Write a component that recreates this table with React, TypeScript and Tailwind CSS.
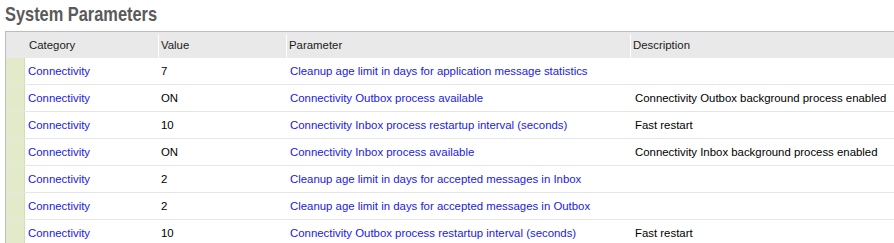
import React from 'react';

type Row = { category: string; value: string; parameter: string; description: string };

const rows: Row[] = [
  { category: 'Connectivity', value: '7', parameter: 'Cleanup age limit in days for application message statistics', description: '' },
  { category: 'Connectivity', value: 'ON', parameter: 'Connectivity Outbox process available', description: 'Connectivity Outbox background process enabled' },
  { category: 'Connectivity', value: '10', parameter: 'Connectivity Inbox process restartup interval (seconds)', description: 'Fast restart' },
  { category: 'Connectivity', value: 'ON', parameter: 'Connectivity Inbox process available', description: 'Connectivity Inbox background process enabled' },
  { category: 'Connectivity', value: '2', parameter: 'Cleanup age limit in days for accepted messages in Inbox', description: '' },
  { category: 'Connectivity', value: '2', parameter: 'Cleanup age limit in days for accepted messages in Outbox', description: '' },
  { category: 'Connectivity', value: '10', parameter: 'Connectivity Outbox process restartup interval (seconds)', description: 'Fast restart' },
];

export default function App() {
  return (
    <div className="w-[894px] h-[243px] overflow-hidden bg-white font-['Liberation_Sans',Arial,sans-serif]">
      <div className="h-[31px] pl-[5px] pt-[1px]">
        {/* condensed heading: no narrow face installed, so squeeze the regular bold */}
        <h1 className="inline-block origin-left scale-x-[0.78] text-[21px] leading-[25px] font-bold text-[#5a5a5a]">
          System Parameters
        </h1>
      </div>
      <div className="ml-[5px] w-[920px] border-l border-t border-[#bdbdbd] text-[11.4px]">
        <div className="flex h-[26px] bg-[#e9e9ea] text-[#1a1a1a] pt-[2px]">
          <div className="w-[20px] shrink-0" />
          <div className="w-[133px] shrink-0 flex items-center pl-[3px] border-r border-white">Category</div>
          <div className="w-[128px] shrink-0 flex items-center pl-[2px] border-r border-white">Value</div>
          <div className="w-[344px] shrink-0 flex items-center pl-[2px] border-r border-white">Parameter</div>
          <div className="flex-1 flex items-center pl-[2px]">Description</div>
        </div>
        {rows.map((r, i) => (
          <div key={i} className="flex h-[27px] border-b border-[#e6e6e6]">
            <div className="w-[19px] shrink-0 bg-[#e2eac9] border-r border-[#d4dcbc]" />
            <div className="w-[134px] shrink-0 flex items-center pl-[3px] pt-[2px] text-[#2020e6]">{r.category}</div>
            <div className="w-[129px] shrink-0 flex items-center pl-[2px] pt-[2px] text-black">{r.value}</div>
            <div className="w-[345px] shrink-0 flex items-center pl-[2px] pt-[2px] text-[#2020e6]">{r.parameter}</div>
            <div className="flex-1 flex items-center pl-[2px] pt-[2px] text-black">{r.description}</div>
          </div>
        ))}
      </div>
    </div>
  );
}
